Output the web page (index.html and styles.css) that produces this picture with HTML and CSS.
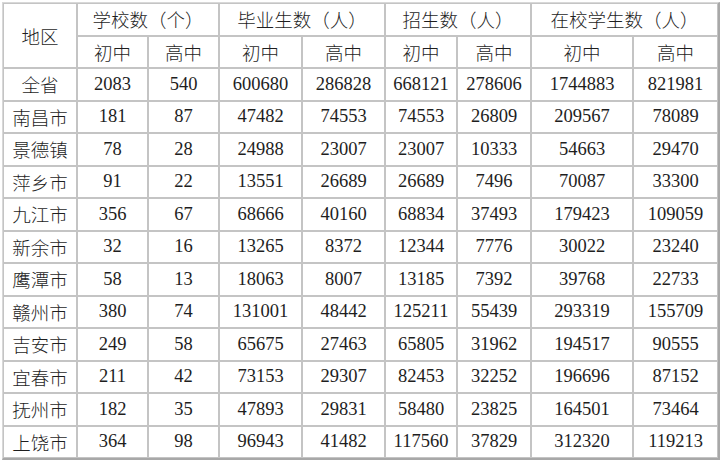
FILE: index.html
```html
<!DOCTYPE html>
<html lang="zh">
<head>
<meta charset="utf-8">
<link rel="stylesheet" href="styles.css">
</head>
<body>
<table class="stats">
<colgroup>
<col class="c1"><col class="c2"><col class="c3"><col class="c4"><col class="c5"><col class="c6"><col class="c7"><col class="c8"><col class="c9">
</colgroup>
<tr><td rowspan="2">地区</td><td colspan="2">学校数（个）</td><td colspan="2">毕业生数（人）</td><td colspan="2">招生数（人）</td><td colspan="2">在校学生数（人）</td></tr>
<tr><td>初中</td><td>高中</td><td>初中</td><td>高中</td><td>初中</td><td>高中</td><td>初中</td><td>高中</td></tr>
<tr><td>全省</td><td>2083</td><td>540</td><td>600680</td><td>286828</td><td>668121</td><td>278606</td><td>1744883</td><td>821981</td></tr>
<tr><td>南昌市</td><td>181</td><td>87</td><td>47482</td><td>74553</td><td>74553</td><td>26809</td><td>209567</td><td>78089</td></tr>
<tr><td>景德镇</td><td>78</td><td>28</td><td>24988</td><td>23007</td><td>23007</td><td>10333</td><td>54663</td><td>29470</td></tr>
<tr><td>萍乡市</td><td>91</td><td>22</td><td>13551</td><td>26689</td><td>26689</td><td>7496</td><td>70087</td><td>33300</td></tr>
<tr><td>九江市</td><td>356</td><td>67</td><td>68666</td><td>40160</td><td>68834</td><td>37493</td><td>179423</td><td>109059</td></tr>
<tr><td>新余市</td><td>32</td><td>16</td><td>13265</td><td>8372</td><td>12344</td><td>7776</td><td>30022</td><td>23240</td></tr>
<tr><td>鹰潭市</td><td>58</td><td>13</td><td>18063</td><td>8007</td><td>13185</td><td>7392</td><td>39768</td><td>22733</td></tr>
<tr><td>赣州市</td><td>380</td><td>74</td><td>131001</td><td>48442</td><td>125211</td><td>55439</td><td>293319</td><td>155709</td></tr>
<tr><td>吉安市</td><td>249</td><td>58</td><td>65675</td><td>27463</td><td>65805</td><td>31962</td><td>194517</td><td>90555</td></tr>
<tr><td>宜春市</td><td>211</td><td>42</td><td>73153</td><td>29307</td><td>82453</td><td>32252</td><td>196696</td><td>87152</td></tr>
<tr><td>抚州市</td><td>182</td><td>35</td><td>47893</td><td>29831</td><td>58480</td><td>23825</td><td>164501</td><td>73464</td></tr>
<tr><td>上饶市</td><td>364</td><td>98</td><td>96943</td><td>41482</td><td>117560</td><td>37829</td><td>312320</td><td>119213</td></tr>
</table>
</body>
</html>
```
FILE: styles.css
```css
html, body {
  margin: 0;
  background: #ffffff;
}
body {
  padding: 2px;
}
.stats {
  table-layout: fixed;
  width: 718px;
  border-collapse: separate;
  border-spacing: 0;
  border-top: 1px solid #d8d8d8;
  border-left: 1px solid #d8d8d8;
  border-right: 2px solid #a8a8a8;
  border-bottom: 2px solid #a8a8a8;
  font-family: "Liberation Serif", "Noto Sans CJK SC", serif;
  font-size: 18.5px;
  font-weight: 300;
  color: #1e1e1e;
}
.stats td {
  border: 1px solid #c4c4c4;
  height: 32.5px;
  box-sizing: border-box;
  padding: 0;
  text-align: center;
  vertical-align: middle;
  white-space: nowrap;
  overflow: hidden;
}
.c1 { width: 74px; }
.c2 { width: 71px; }
.c3 { width: 71px; }
.c4 { width: 83px; }
.c5 { width: 83px; }
.c6 { width: 72px; }
.c7 { width: 74px; }
.c8 { width: 102px; }
.c9 { width: 85px; }
```
